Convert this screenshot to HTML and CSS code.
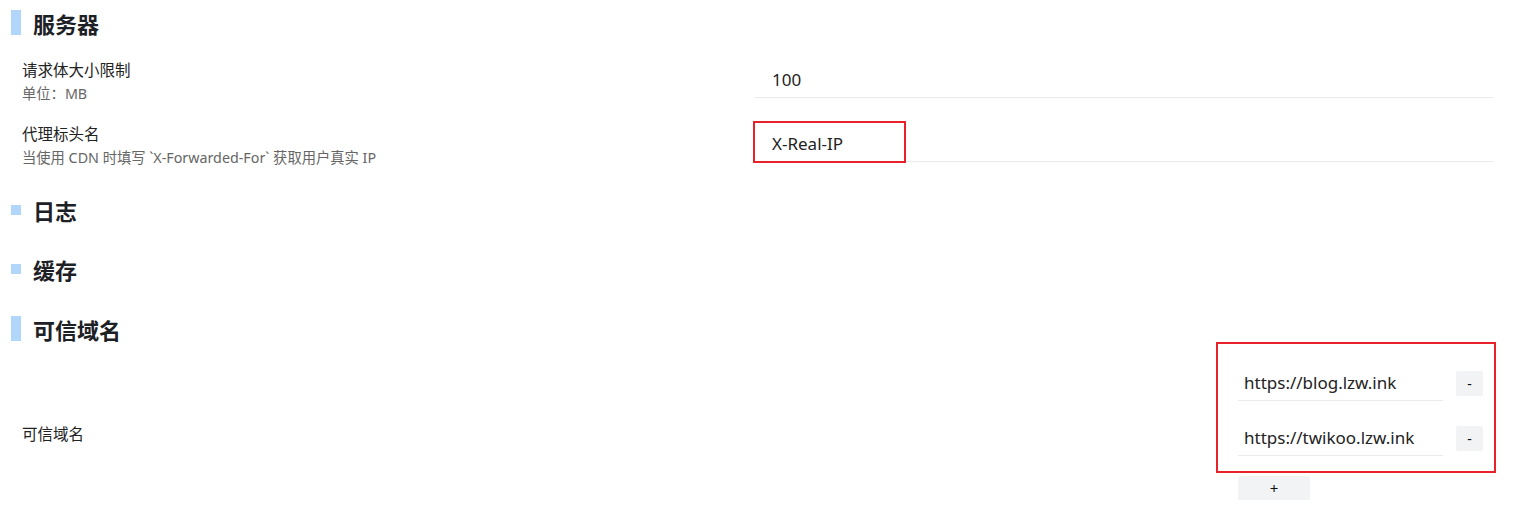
FILE: index.html
```html
<!DOCTYPE html>
<html lang="zh-CN">
<head>
    <meta charset="UTF-8">
    <meta name="viewport" content="width=device-width, initial-scale=1.0">
    <title>配置</title>
    <link rel="stylesheet" href="styles.css">
</head>
<body>

    <div class="section">
        <div class="section-title open"><span class="bar"></span>服务器</div>
        <div class="config-list">
            <div class="config-row">
                <div class="config-label">
                    <div class="label-title">请求体大小限制</div>
                    <div class="label-desc">单位：MB</div>
                </div>
                <div class="config-value">
                    <input class="text-input" type="text" value="100">
                </div>
            </div>
            <div class="config-row">
                <div class="config-label">
                    <div class="label-title">代理标头名</div>
                    <div class="label-desc">当使用 CDN 时填写 `X-Forwarded-For` 获取用户真实 IP</div>
                </div>
                <div class="config-value">
                    <input class="text-input" type="text" value="X-Real-IP">
                    <div class="mark mark-ip"></div>
                </div>
            </div>
        </div>
    </div>

    <div class="section">
        <div class="section-title"><span class="bar"></span>日志</div>
    </div>

    <div class="section">
        <div class="section-title"><span class="bar"></span>缓存</div>
    </div>

    <div class="section section-trusted">
        <div class="section-title open"><span class="bar"></span>可信域名</div>
        <div class="config-row trusted-row">
            <div class="config-label trusted-label">
                <div class="label-title">可信域名</div>
            </div>
            <div class="array-editor">
                <div class="array-items">
                    <div class="array-item">
                        <input class="text-input small" type="text" value="https://blog.lzw.ink">
                        <button class="btn-remove">-</button>
                    </div>
                    <div class="array-item">
                        <input class="text-input small" type="text" value="https://twikoo.lzw.ink">
                        <button class="btn-remove">-</button>
                    </div>
                </div>
                <button class="btn-add">+</button>
            </div>
        </div>
    </div>

</body>
</html>
```

FILE: styles.css
```css
body {
    margin: 0;
    padding: 0 24px 0 11px;
    font-family: "Noto Sans", "Noto Sans CJK SC", sans-serif;
    color: #222;
    background: #fff;
}

.section {
    margin-top: 34px;
}

.section:first-child {
    margin-top: 10px;
}

.section:nth-child(2) {
    margin-top: 30px;
}

.section-trusted {
    margin-top: 35px;
}

.section-title {
    display: flex;
    align-items: center;
    gap: 12px;
    height: 25px;
    font-size: 22px;
    font-weight: bold;
    color: #1d2126;
}

.section-title .bar {
    width: 10px;
    height: 10px;
    background: #b0d6fa;
}

.section-title.open .bar {
    height: 25px;
}

.config-list {
    display: flex;
    flex-direction: column;
    gap: 18px;
    margin-top: 22px;
}

.config-row {
    display: flex;
    align-items: center;
    justify-content: space-between;
    padding-left: 11px;
    height: 46px;
}

.label-title {
    font-size: 15.5px;
    line-height: 24px;
    color: #222;
}

.label-desc {
    margin-top: 3px;
    font-size: 14.3px;
    line-height: 18px;
    color: #666;
}

.config-value {
    position: relative;
    width: 739px;
}

.text-input {
    display: block;
    box-sizing: border-box;
    width: 100%;
    height: 36px;
    padding: 0 17px;
    border: none;
    border-bottom: 1px solid #ebebeb;
    outline: none;
    background: transparent;
    font-family: inherit;
    font-size: 17px;
    color: #222;
}

/* red highlight boxes */
.mark-ip {
    position: absolute;
    left: -2px;
    top: -5px;
    width: 149px;
    height: 38px;
    border: 2px solid #e8212b;
}

.trusted-row {
    height: auto;
    margin-top: 1px;
}

.trusted-label {
    margin-top: 26px;
}

.array-editor {
    margin-right: -2px;
}

.array-items {
    display: flex;
    flex-direction: column;
    gap: 19px;
    width: 247px;
    padding: 21px 9px 15px 20px;
    border: 2px solid #e8212b;
}

.array-item {
    display: flex;
    align-items: center;
    gap: 13px;
}

.text-input.small {
    width: 205px;
    padding: 0 6px;
}

.btn-remove {
    width: 27px;
    height: 25px;
    padding: 0;
    border: none;
    border-radius: 2px;
    background: #f2f3f5;
    font-family: inherit;
    font-size: 14px;
    color: #111;
}

.btn-add {
    display: block;
    width: 72px;
    height: 24px;
    margin: 3px 0 0 22px;
    padding: 0;
    border: none;
    border-radius: 2px;
    background: #f2f3f5;
    font-family: inherit;
    font-size: 15px;
    color: #111;
}
```
